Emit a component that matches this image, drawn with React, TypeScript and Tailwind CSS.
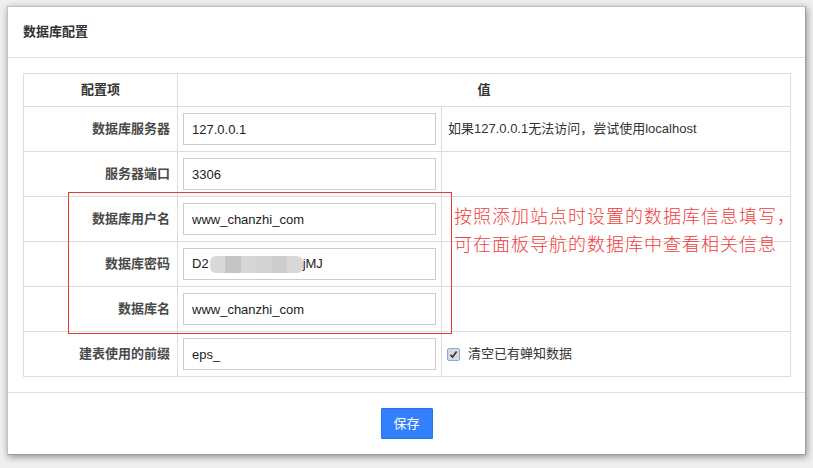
import React from "react";

const F = "font-['Liberation_Sans','Noto_Sans_CJK_SC',sans-serif]";

function Label({ children }: { children: React.ReactNode }) {
  return (
    <div className="h-[45px] border-b border-r border-[#dddddd] flex items-center justify-end pr-[7px] text-[13px] font-bold text-[#4a4a4a]">
      {children}
    </div>
  );
}

function InputCell({ value }: { value: string }) {
  return (
    <div className="h-[45px] border-b border-r border-[#dddddd] flex items-center px-[5px]">
      <input
        readOnly
        value={value}
        className={`w-full h-[32px] border border-[#cccccc] px-[8px] text-[13px] text-[#222] outline-none bg-white ${F}`}
      />
    </div>
  );
}

function Side({ children }: { children?: React.ReactNode }) {
  return (
    <div className="h-[45px] border-b border-r border-[#dddddd] flex items-center pl-[6px] text-[13px] text-[#333]">
      {children}
    </div>
  );
}

export default function App() {
  const blur = ["#d9d9d9", "#c6c4c6", "#d7d7d7", "#d3d3d3", "#cdcdcd", "#d8d8d8"];
  return (
    <div className={`relative w-[813px] h-[468px] bg-[#efefef] overflow-hidden pt-[6px] pl-[7px] ${F}`}>
      <div className="w-[799px] bg-white border border-[#c2c2c2] border-r-[#9c9c9c] border-b-[#9c9c9c] shadow-[1px_2px_7px_rgba(0,0,0,0.4)]">
        {/* header */}
        <div className="h-[51px] border-b border-[#e2e2e2] flex items-center pl-[15px] text-[13px] font-bold text-[#333]">
          数据库配置
        </div>
        {/* body */}
        <div className="pt-[15px] pb-[15px] pl-[15px] pr-[14px]">
          <div className="grid grid-cols-[154px_264px_349px] border-t border-l border-[#dddddd] w-[768px]">
            <div className="h-[33px] border-b border-r border-[#dddddd] flex items-center justify-center text-[13px] font-bold text-[#333]">
              配置项
            </div>
            <div className="col-span-2 h-[33px] border-b border-r border-[#dddddd] flex items-center justify-center text-[13px] font-bold text-[#333]">
              值
            </div>

            <Label>数据库服务器</Label>
            <InputCell value="127.0.0.1" />
            <Side>如果127.0.0.1无法访问，尝试使用localhost</Side>

            <Label>服务器端口</Label>
            <InputCell value="3306" />
            <Side />

            <Label>数据库用户名</Label>
            <InputCell value="www_chanzhi_com" />
            <Side />

            <Label>数据库密码</Label>
            <div className="h-[45px] border-b border-r border-[#dddddd] flex items-center px-[5px]">
              <div className="w-full h-[32px] border border-[#cccccc] pl-[8px] flex items-center text-[13px] text-[#222]">
                <span>D2</span>
                <span className="flex h-[17px] w-[93px] ml-[1px] rounded-[6px] overflow-hidden blur-[0.6px]">
                  {blur.map((c, i) => (
                    <span key={i} className="flex-1 h-full" style={{ backgroundColor: c }} />
                  ))}
                </span>
                <span>jMJ</span>
              </div>
            </div>
            <Side />

            <Label>数据库名</Label>
            <InputCell value="www_chanzhi_com" />
            <Side />

            <Label>建表使用的前缀</Label>
            <InputCell value="eps_" />
            <Side>
              <span className="w-[13px] h-[13px] ml-[-1px] mr-[8px] border border-[#7ea9ec] rounded-[2px] bg-[#dadada] flex items-center justify-center">
                <svg width="9" height="9" viewBox="0 0 9 9">
                  <path d="M1.5 4.8 L3.6 7 L7.6 1.6" fill="none" stroke="#333" strokeWidth="1.7" />
                </svg>
              </span>
              清空已有蝉知数据
            </Side>
          </div>
        </div>
        {/* footer */}
        <div className="border-t border-[#e2e2e2] flex justify-center pt-[15px] pb-[15px]">
          <button className="w-[52px] h-[31px] bg-[#3280fc] border border-[#2a72e8] rounded-[1px] text-white text-[13px] flex items-center justify-center">
            保存
          </button>
        </div>
      </div>

      {/* annotation overlay */}
      <div className="absolute left-[68px] top-[192px] w-[384px] h-[142px] border border-[#e53935]" />
      <div className="absolute left-[454px] top-[201px] text-[18px] leading-[28px] tracking-[1px] text-[#f03c3c] font-['Noto_Sans_CJK_SC',sans-serif] font-light">
        <div>按照添加站点时设置的数据库信息填写，</div>
        <div>可在面板导航的数据库中查看相关信息</div>
      </div>
    </div>
  );
}
